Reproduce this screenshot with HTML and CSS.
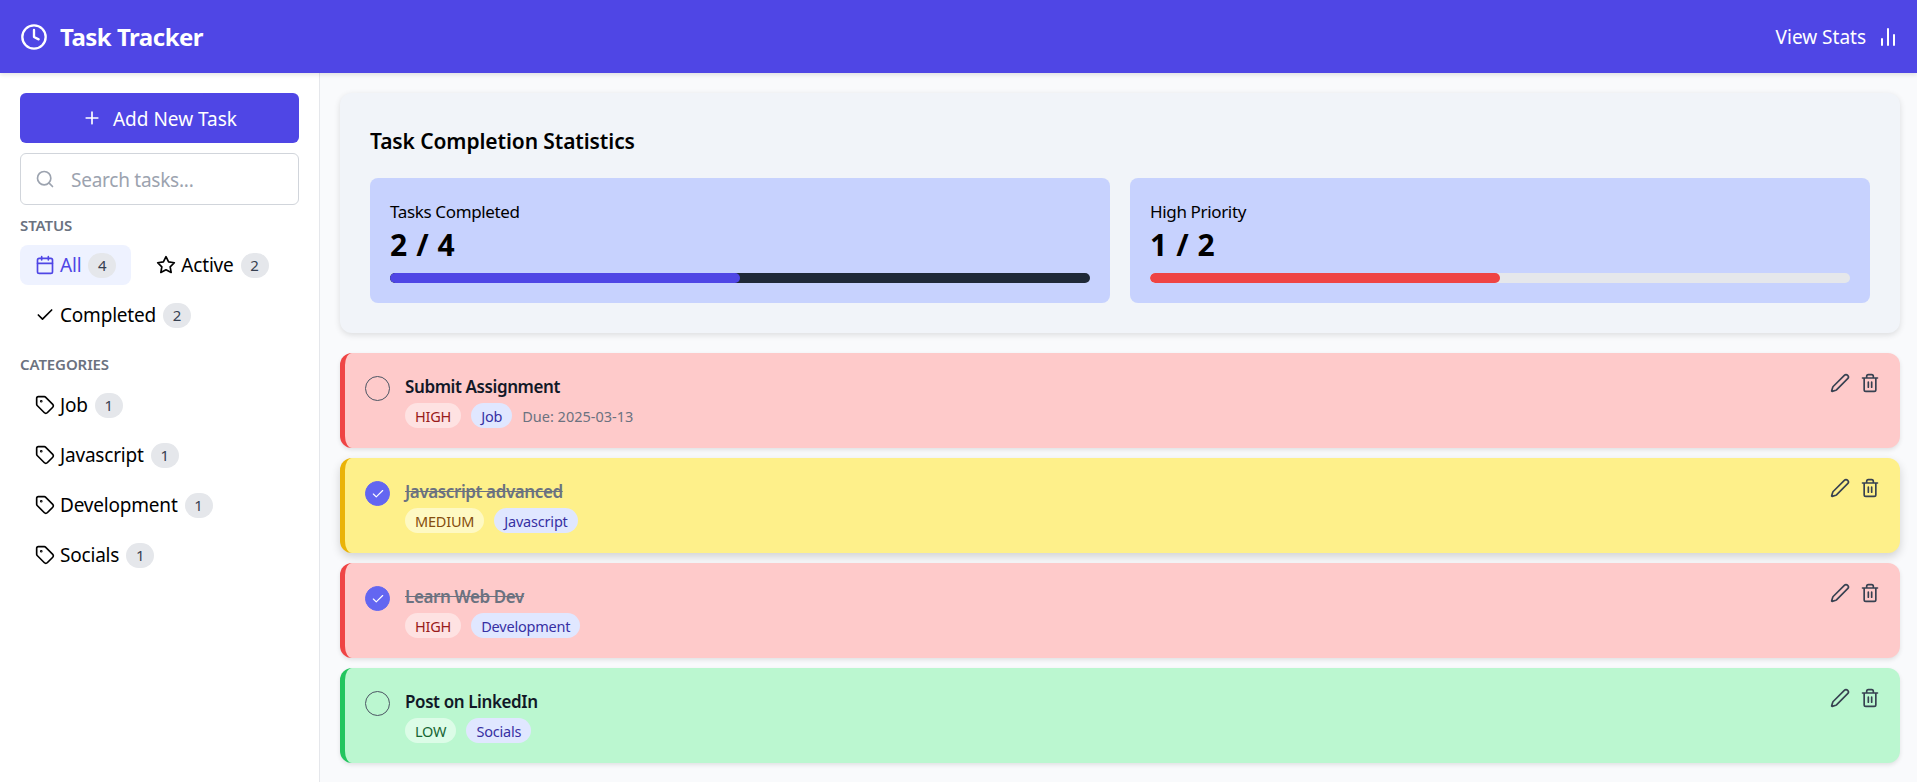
FILE: index.html
```html
<!DOCTYPE html>
<html lang="en">
<head>
<meta charset="utf-8">
<title>Task Tracker</title>
<link rel="stylesheet" href="styles.css">
</head>
<body>
<svg class="sprites" width="0" height="0" aria-hidden="true">
  <symbol id="i-tag" viewBox="0 0 24 24"><path d="M12.6 2.6A2 2 0 0 0 11.2 2H4a2 2 0 0 0-2 2v7.2a2 2 0 0 0 .6 1.4l8.7 8.7a2.4 2.4 0 0 0 3.4 0l6.6-6.6a2.4 2.4 0 0 0 0-3.4z"/><circle cx="7.500" cy="7.500" r=".6"/></symbol>
  <symbol id="i-pencil" viewBox="0 0 24 24"><path d="M21.2 6.8a2.8 2.8 0 0 0-4-4L3.8 16.2a2 2 0 0 0-.5.8l-1.3 4.4a.5.5 0 0 0 .6.6l4.4-1.3a2 2 0 0 0 .8-.5z"/></symbol>
  <symbol id="i-trash" viewBox="0 0 24 24"><path d="M3 6h18M19 6v14a2 2 0 0 1-2 2H7a2 2 0 0 1-2-2V6M8 6V4a2 2 0 0 1 2-2h4a2 2 0 0 1 2 2v2M10 11v6M14 11v6"/></symbol>
  <symbol id="i-check" viewBox="0 0 24 24"><path d="M20 6 9 17l-5-5"/></symbol>
</svg>
<header class="topbar">
  <div class="brand">
    <svg class="icon brand-icon" viewBox="0 0 24 24"><circle cx="12" cy="12" r="10"/><path d="M12 6v6l4 2"/></svg>
    <h1>Task Tracker</h1>
  </div>
  <button class="stats-link">View Stats
    <svg class="icon stats-icon" viewBox="0 0 24 24"><path d="M12 20V4M18 20V10M6 20v-6"/></svg>
  </button>
</header>
<div class="layout">
  <aside class="sidebar">
    <button class="add-btn">
      <svg class="icon add-icon" viewBox="0 0 24 24"><path d="M5 12h14M12 5v14"/></svg>
      <span class="btn-label">Add New Task</span>
    </button>
    <label class="search">
      <svg class="icon search-icon" viewBox="0 0 24 24"><circle cx="11" cy="11" r="8"/><path d="m21 21-4.3-4.3"/></svg>
      <input type="text" placeholder="Search tasks...">
    </label>
    <h2 class="side-title">STATUS</h2>
    <div class="filters">
      <a class="filter active">
        <svg class="icon" viewBox="0 0 24 24"><rect x="3" y="4" width="18" height="18" rx="2"/><path d="M16 2v4M8 2v4M3 10h18"/></svg>
        All <span class="count">4</span>
      </a>
      <a class="filter">
        <svg class="icon" viewBox="0 0 24 24"><path d="m12 2 3.1 6.3 6.9 1-5 4.9 1.2 6.800-6.200-3.200L5.800 21 7 14.200 2 9.300l6.900-1z"/></svg>
        Active <span class="count">2</span>
      </a>
      <a class="filter">
        <svg class="icon"><use href="#i-check"/></svg>
        Completed <span class="count">2</span>
      </a>
    </div>
    <h2 class="side-title cat-title">CATEGORIES</h2>
    <div class="cats">
      <a class="filter"><svg class="icon"><use href="#i-tag"/></svg>Job <span class="count">1</span></a>
      <a class="filter"><svg class="icon"><use href="#i-tag"/></svg>Javascript <span class="count">1</span></a>
      <a class="filter"><svg class="icon"><use href="#i-tag"/></svg>Development <span class="count">1</span></a>
      <a class="filter"><svg class="icon"><use href="#i-tag"/></svg>Socials <span class="count">1</span></a>
    </div>
  </aside>
  <main class="content">
    <section class="stats-card">
      <h2>Task Completion Statistics</h2>
      <div class="stats-grid">
        <div class="stat">
          <div class="stat-label">Tasks Completed</div>
          <div class="stat-value">2 / 4</div>
          <div class="bar bar-dark"><div class="fill fill-indigo"></div></div>
        </div>
        <div class="stat">
          <div class="stat-label">High Priority</div>
          <div class="stat-value">1 / 2</div>
          <div class="bar bar-light"><div class="fill fill-red"></div></div>
        </div>
      </div>
    </section>
    <ul class="tasks">
      <li class="task high">
        <span class="check"></span>
        <div class="task-body">
          <div class="task-title">Submit Assignment</div>
          <div class="meta"><span class="pill p-high">HIGH</span><span class="pill p-cat">Job</span><span class="due">Due: 2025-03-13</span></div>
        </div>
        <div class="actions"><svg class="icon"><use href="#i-pencil"/></svg><svg class="icon"><use href="#i-trash"/></svg></div>
      </li>
      <li class="task medium done">
        <span class="check on"><svg class="icon"><use href="#i-check"/></svg></span>
        <div class="task-body">
          <div class="task-title">Javascript advanced</div>
          <div class="meta"><span class="pill p-medium">MEDIUM</span><span class="pill p-cat">Javascript</span></div>
        </div>
        <div class="actions"><svg class="icon"><use href="#i-pencil"/></svg><svg class="icon"><use href="#i-trash"/></svg></div>
      </li>
      <li class="task high done">
        <span class="check on"><svg class="icon"><use href="#i-check"/></svg></span>
        <div class="task-body">
          <div class="task-title">Learn Web Dev</div>
          <div class="meta"><span class="pill p-high">HIGH</span><span class="pill p-cat">Development</span></div>
        </div>
        <div class="actions"><svg class="icon"><use href="#i-pencil"/></svg><svg class="icon"><use href="#i-trash"/></svg></div>
      </li>
      <li class="task low">
        <span class="check"></span>
        <div class="task-body">
          <div class="task-title">Post on LinkedIn</div>
          <div class="meta"><span class="pill p-low">LOW</span><span class="pill p-soc">Socials</span></div>
        </div>
        <div class="actions"><svg class="icon"><use href="#i-pencil"/></svg><svg class="icon"><use href="#i-trash"/></svg></div>
      </li>
    </ul>
  </main>
</div>
</body>
</html>
```
FILE: styles.css
```css
* { box-sizing: border-box; }
html, body { height: 100%; }
body {
  margin: 0;
  font-family: "Noto Sans", "Open Sans", sans-serif;
  color: #000;
  background: #f9fafc;
  overflow: hidden;
  display: flex;
  flex-direction: column;
}
.sprites { position: absolute; }
.icon {
  width: 20px;
  height: 20px;
  fill: none;
  stroke: currentColor;
  stroke-width: 2;
  stroke-linecap: round;
  stroke-linejoin: round;
  flex: none;
}
.topbar {
  height: 73px;
  flex: none;
  display: flex;
  align-items: center;
  justify-content: space-between;
  padding: 0 17px 0 20px;
  background: #4f46e5;
  color: #fff;
  box-shadow: 0 2px 4px rgba(0,0,0,.1);
  position: relative;
}
.brand { display: flex; align-items: center; gap: 12px; }
.brand-icon { width: 28px; height: 28px; }
.brand h1 { margin: 0; font-size: 24px; font-weight: 700; letter-spacing: -.5px; }
.stats-link {
  display: flex;
  align-items: center;
  gap: 10px;
  padding: 0;
  border: 0;
  background: none;
  color: #fff;
  font: inherit;
  font-size: 19px;
}
.stats-icon { width: 24px; height: 24px; }
.layout { flex: 1; display: flex; min-height: 0; }
.sidebar {
  width: 320px;
  flex: none;
  padding: 20px;
  background: #fff;
  border-right: 1px solid #e5e7eb;
}
.add-btn {
  width: 100%;
  height: 50px;
  display: flex;
  align-items: center;
  justify-content: center;
  gap: 11px;
  border: 0;
  border-radius: 6px;
  background: #4f46e5;
  color: #fff;
  font: inherit;
  font-size: 19px;
}
.btn-label { padding-top: 2px; }
.search {
  height: 52px;
  margin-top: 10px;
  display: flex;
  align-items: center;
  gap: 16px;
  padding: 0 14px;
  border: 1px solid #d1d5db;
  border-radius: 6px;
  background: #fff;
}
.search-icon { color: #9ca3af; }
.search input {
  flex: 1;
  min-width: 0;
  border: 0;
  outline: 0;
  padding: 2px 0 0;
  font: inherit;
  font-size: 19px;
  letter-spacing: -.25px;
}
.search input::placeholder { color: #9ca3af; opacity: 1; }
.side-title {
  margin: 11px 0 0;
  font-size: 15px;
  line-height: 19px;
  font-weight: 600;
  color: #6b7280;
  letter-spacing: -.1px;
}
.filters { margin-top: 10px; display: flex; flex-wrap: wrap; gap: 10px; }
.filter {
  height: 40px;
  display: inline-flex;
  align-items: center;
  gap: 7px;
  padding: 0 15px;
  border-radius: 8px;
  font-size: 19px;
  letter-spacing: -.2px;
}
.filter .icon { margin-right: -2px; }
.filter.active { background: #eef2ff; color: #4f46e5; }
.count {
  min-width: 28px;
  height: 25px;
  padding: 0 8px;
  display: inline-flex;
  align-items: center;
  justify-content: center;
  border-radius: 13px;
  background: #e5e7eb;
  color: #374151;
  font-size: 15px;
  letter-spacing: 0;
}
.cat-title { margin-top: 20px; }
.cats { margin-top: 11px; display: flex; flex-direction: column; align-items: flex-start; row-gap: 10px; }
.content { flex: 1; min-width: 0; padding: 20px 17px 0 20px; }
.stats-card {
  height: 240px;
  padding: 30px;
  border-radius: 12px;
  background: #f1f4f9;
  box-shadow: 0 2px 6px rgba(0,0,0,.12);
}
.stats-card h2 { margin: 0; font-size: 21px; line-height: 36px; font-weight: 600; letter-spacing: -.1px; }
.stats-grid { margin-top: 19px; display: grid; grid-template-columns: 1fr 1fr; gap: 20px; }
.stat { height: 125px; padding: 21px 20px 0; border-radius: 8px; background: #c7d2fe; }
.stat-label { font-size: 17px; line-height: 25px; letter-spacing: -.35px; }
.stat-value { margin-top: 3px; font-size: 30px; line-height: 36px; font-weight: 700; letter-spacing: .6px; }
.bar { margin-top: 10px; height: 10px; border-radius: 5px; overflow: hidden; }
.bar-dark { background: #1f2937; }
.bar-light { background: #e5e7eb; }
.fill { width: 50%; height: 100%; border-radius: 5px; }
.fill-indigo { background: #4f46e5; }
.fill-red { background: #ef4444; }
.tasks { list-style: none; margin: 20px 0 0; padding: 0; display: flex; flex-direction: column; gap: 10px; }
.task {
  height: 95px;
  display: flex;
  align-items: flex-start;
  padding: 21px 20px 0 20px;
  border-left: 5px solid;
  border-radius: 12px;
  box-shadow: 0 2px 4px rgba(0,0,0,.1);
}
.high { background: #fecaca; border-color: #ef4444; }
.medium { background: #fef08a; border-color: #eab308; box-shadow: 0 4px 10px rgba(0,0,0,.16); }
.low { background: #bbf7d0; border-color: #22c55e; }
.check {
  width: 25px;
  height: 25px;
  margin-top: 2px;
  flex: none;
  display: flex;
  align-items: center;
  justify-content: center;
  border: 1px solid #4b5563;
  border-radius: 50%;
}
.check.on { background: #6366f1; border-color: #6366f1; color: #fff; }
.check .icon { width: 14px; height: 14px; }
.task-body { margin-left: 15px; flex: 1; min-width: 0; }
.task-title { font-size: 17px; line-height: 25px; font-weight: 600; color: #111827; letter-spacing: -.4px; }
.done .task-title { color: #6b7280; text-decoration: line-through; }
.meta { margin-top: 4px; display: flex; align-items: center; gap: 10px; }
.pill { height: 25px; padding: 0 10px; display: inline-flex; align-items: center; border-radius: 13px; font-size: 14.5px; letter-spacing: -.2px; }
.p-high { background: #fee2e2; color: #991b1b; }
.p-medium { background: #fef9c3; color: #854d0e; }
.p-low { background: #dcfce7; color: #166534; }
.p-cat { background: #e0e7ff; color: #3730a3; }
.p-soc { background: #e0e7ff; color: #3730a3; }
.due { font-size: 14.5px; color: #6b7280; }
.actions { display: flex; gap: 10px; margin-top: -1px; color: #374151; }
```
